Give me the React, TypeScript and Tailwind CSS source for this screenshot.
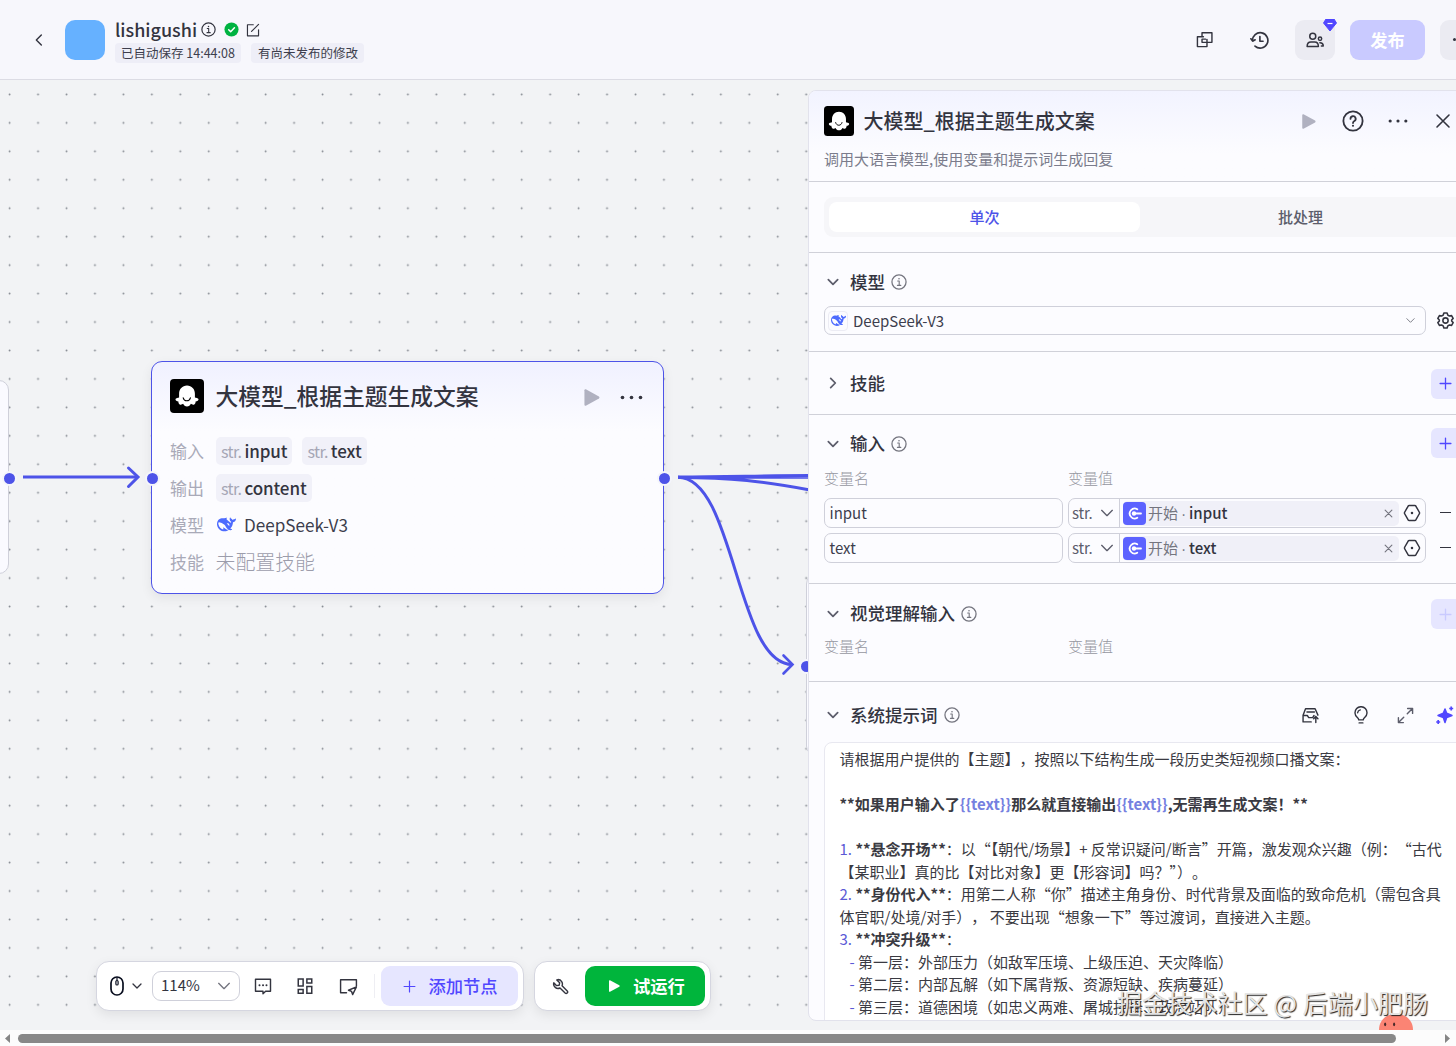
import { ReactNode, SVGProps, useState } from "react";

type IconProps = SVGProps<SVGSVGElement>;

function Icon({ children, ...rest }: IconProps) {
  return (
    <svg
      viewBox="0 0 24 24"
      fill="none"
      stroke="currentColor"
      strokeWidth={2}
      strokeLinecap="round"
      strokeLinejoin="round"
      {...rest}
    >
      {children}
    </svg>
  );
}

const InfoIcon = (p: IconProps) => (
  <Icon strokeWidth={1.9} {...p}>
    <circle cx="12" cy="12" r="10.6" />
    <path d="M10 10.5h2.3V17M9.6 17h5.2" strokeWidth={1.7} />
    <circle cx="12" cy="7.2" r="1.2" fill="currentColor" stroke="none" />
  </Icon>
);

const ChevronDown = (p: IconProps) => (
  <Icon {...p}>
    <path d="M4 8l8 8 8-8" />
  </Icon>
);

const PlusIcon = (p: IconProps) => (
  <Icon {...p}>
    <path d="M12 2v20M2 12h20" />
  </Icon>
);

const PlayIcon = (p: IconProps) => (
  <svg viewBox="0 0 24 24" fill="currentColor" {...p}>
    <path d="M2 1.6C2 .5 3 0 4 .5l18.5 10c1 .6 1 2.300 0 2.900L4 23.500c-1 .5-2 0-2-1.100z" />
  </svg>
);

const DotsIcon = (p: IconProps) => (
  <svg viewBox="0 0 24 24" fill="currentColor" {...p}>
    <circle cx="2.600" cy="12" r="1.900" />
    <circle cx="12" cy="12" r="1.900" />
    <circle cx="21.400" cy="12" r="1.900" />
  </svg>
);

const DeepSeekLogo = (p: IconProps) => (
  <svg viewBox="0 0 24 24" fill="#4d6bfe" {...p}>
    <path d="M23.748 4.482c-.254-.124-.364.113-.512.234-.051.039-.094.09-.137.136-.372.397-.806.657-1.373.626-.829-.046-1.537.214-2.163.848-.133-.782-.575-1.248-1.247-1.548-.352-.156-.708-.311-.955-.65-.172-.241-.219-.51-.305-.774-.055-.16-.11-.323-.293-.35-.2-.031-.278.136-.356.276-.313.572-.434 1.202-.422 1.84.027 1.436.633 2.58 1.838 3.393.137.093.172.187.129.323-.082.28-.18.552-.266.833-.055.179-.137.217-.329.14a5.526 5.526 0 01-1.736-1.18c-.857-.828-1.631-1.742-2.597-2.458a11.365 11.365 0 00-.689-.471c-.985-.957.13-1.743.388-1.836.27-.098.093-.432-.779-.428-.872.004-1.67.295-2.687.684a3.055 3.055 0 01-.465.137 9.597 9.597 0 00-2.883-.102c-1.885.21-3.39 1.102-4.497 2.623C.082 8.606-.231 10.684.152 12.85c.403 2.284 1.569 4.175 3.36 5.653 1.858 1.533 3.997 2.284 6.438 2.14 1.482-.085 3.133-.284 4.994-1.86.47.234.962.327 1.78.397.63.059 1.236-.03 1.705-.128.735-.156.684-.837.419-.961-2.155-1.004-1.682-.595-2.113-.926 1.096-1.296 2.746-2.642 3.392-7.003.05-.347.007-.565 0-.845-.004-.17.035-.237.23-.256a4.173 4.173 0 001.545-.475c1.396-.763 1.96-2.015 2.093-3.517.02-.23-.004-.467-.247-.588zM11.581 18c-2.089-1.642-3.102-2.183-3.52-2.16-.392.024-.321.471-.235.763.09.288.207.486.371.739.114.167.192.416-.113.603-.673.416-1.842-.14-1.897-.167-1.361-.802-2.5-1.86-3.301-3.307-.774-1.393-1.224-2.887-1.298-4.482-.02-.386.093-.522.477-.592a4.696 4.696 0 011.529-.039c2.132.312 3.946 1.265 5.468 2.774.868.86 1.525 1.887 2.202 2.891.72 1.066 1.494 2.082 2.48 2.914.348.292.625.514.891.677-.802.09-2.14.11-3.054-.614zm1-6.44a.306.306 0 01.415-.287.302.302 0 01.2.288.306.306 0 01-.31.307.303.303 0 01-.304-.308zm3.11 1.596c-.2.081-.399.151-.59.16a1.245 1.245 0 01-.798-.254c-.274-.23-.47-.358-.552-.758a1.73 1.73 0 01.016-.588c.07-.327-.008-.537-.239-.727-.187-.156-.426-.199-.688-.199a.559.559 0 01-.254-.078.253.253 0 01-.114-.358c.028-.054.16-.186.192-.21.356-.202.767-.136 1.146.016.352.144.618.408 1.001.782.391.451.462.576.685.914.176.265.336.537.445.848.067.195-.019.354-.25.452z" />
  </svg>
);

// black tile with the smiling ghost, used for LLM nodes
const GhostTile = (p: IconProps) => (
  <svg viewBox="0 0 34 34" {...p}>
    <rect width="34" height="34" rx="4" fill="#000" />
    <path
      d="M17 6.600c-4.700 0-7.900 3.600-7.900 8.200v3.700c-1 .6-3.200.4-3.600 1.600-.3 1.300 1.400 2.300 2.900 2.400-.1 1.500.6 2.900 1.800 3.200 1.200.3 2.200-.5 2.900-.9.700 1.600 2.100 2.700 3.900 2.700s3.200-1.100 3.900-2.700c.7.400 1.700 1.200 2.900.9 1.200-.3 1.900-1.700 1.800-3.200 1.500-.1 3.200-1.100 2.900-2.400-.4-1.200-2.600-1-3.600-1.600v-3.700c0-4.600-3.200-8.200-7.900-8.200z"
      fill="#fff"
    />
    <path d="M13.200 18.800c.5 1.900 1.900 3 3.600 3s3.100-1.100 3.600-3" fill="none" stroke="#000" strokeWidth="1.100" strokeLinecap="round" />
  </svg>
);

function Header() {
  return (
    <header className="flex h-20 shrink-0 items-center border-b border-[#dcdce4] bg-[#f7f7fc] pl-[31px]">
      <Icon className="mr-[18px] h-4 w-4 text-[#33343f]" strokeWidth={2.1}>
        <path d="M15.500 4.500L8 12l7.500 7.500" />
      </Icon>
      <div className="h-10 w-10 rounded-[10px] bg-[#66b1ff]" />
      <div className="ml-[10px] flex flex-col pt-0.5">
        <div className="flex h-[22px] items-center text-[#33343f]">
          <span className="-mt-px w-[86px] text-[18px] font-medium leading-[22px]">lishigushi</span>
          <InfoIcon className="h-[15px] w-[15px]" />
          <svg viewBox="0 0 24 24" className="ml-2 h-[15px] w-[15px]">
            <circle cx="12" cy="12" r="11.300" fill="#00b341" />
            <path d="M7.500 12.300l3.200 3.200 6-6.200" fill="none" stroke="#fff" strokeWidth="2.400" strokeLinecap="round" strokeLinejoin="round" />
          </svg>
          <Icon className="ml-[7px] h-[14px] w-[14px]" strokeWidth={2}>
            <path d="M12.500 3H2.500v19h19V11.500M9.500 14.500L21.500 2.500" />
          </Icon>
        </div>
        <div className="mt-0.5 flex gap-[10px] text-[12.500px] leading-5 text-[#3d3e4d]">
          <span className="h-5 w-[126px] whitespace-nowrap rounded bg-[#eeeef7] pl-[6px]">已自动保存 14:44:08</span>
          <span className="h-5 w-[113px] whitespace-nowrap rounded bg-[#eeeef7] pl-[7px]">有尚未发布的修改</span>
        </div>
      </div>

      <div className="ml-auto flex shrink-0 items-center text-[#33343f]">
        <Icon className="mr-[37px] h-[17px] w-[17px]" strokeWidth={2}>
          <path d="M8.500 8V2.500H22.500v13.500H8.500v-4.500h5M10.500 8H2v14h13.500v-5.500v-4.500" />
        </Icon>
        <Icon className="mr-[26px] mt-px h-[19px] w-[19px]" strokeWidth={2.1}>
          <path d="M3.200 12.500A9.700 9.700 0 1 1 6.300 19M1.200 9.800l2.100 3 3.200-1.600M12.500 7v6h4" />
        </Icon>
        <div className="relative mr-[15px] flex h-10 w-10 items-center justify-center rounded-[9px] bg-[#ebebf2]">
          <Icon className="h-[18px] w-[18px]" strokeWidth={2}>
            <circle cx="9" cy="7" r="4" />
            <path d="M1.500 20.500c0-4 2-6 5-6h5c3 0 5 2 5 6z" />
            <circle cx="18.700" cy="10.300" r="2.200" />
            <path d="M18.500 15.500c3 0 4.500 1.500 4.500 4.500h-2.500" />
          </Icon>
          <svg viewBox="0 0 14 12" className="absolute -right-[2px] -top-[1px] h-3 w-[14px]">
            <path d="M3 0h8l2.500 4L7 12 .5 4z" fill="#5147ff" stroke="#5147ff" strokeLinejoin="round" />
            <path d="M4.500 4.500h5" stroke="#fff" strokeWidth="1.200" />
          </svg>
        </div>
        <button className="h-10 w-[75px] rounded-[9px] bg-[#c9caff] text-[17.200px] font-bold leading-10 text-white">发布</button>
        <div className="ml-[15px] flex h-10 w-4 items-center justify-end overflow-hidden rounded-l-[9px] bg-[#ebebf2]">
          <span className="h-[3px] w-[3px] rounded-full bg-[#33343f]" />
        </div>
      </div>
    </header>
  );
}

function Wires() {
  return (
    <svg className="absolute inset-0 h-full w-full" fill="none" stroke="#4d53e8" strokeWidth="3">
      <defs>
        <pattern id="dots" x="-4.700" y="0.200" width="28.450" height="28.450" patternUnits="userSpaceOnUse">
          <circle cx="14.300" cy="14.200" r="0.950" fill="#868a92" stroke="none" />
        </pattern>
      </defs>
      <rect width="100%" height="100%" fill="url(#dots)" stroke="none" />
      <path d="M23 397h115" />
      <path d="M128.500 388l9.500 9-9.500 9.500" strokeLinecap="round" />
      <path d="M678 397.200C735 397.200 736 584 792 584.500" />
      <path d="M783.500 575.500l9 9-9 9" strokeLinecap="round" strokeWidth="2.600" />
      <path d="M678 397C730 397 760 395.500 810 395.500M678 397.300h132M678 397.500c55 0 85 4 132 12.500" />
    </svg>
  );
}

function Port({ className }: { className: string }) {
  return <span className={`absolute h-[15px] w-[15px] rounded-full border-2 border-[#f4f5fb] bg-[#4d53e8] ${className}`} />;
}

function VarChip({ name }: { name: string }) {
  return (
    <span className="flex h-[28px] items-center rounded-[5px] bg-[#f1f1f9] px-[5px] text-[17px]">
      <span className="mr-[3px] text-[16px] tracking-[-0.6px] text-[#a5a6b5]">str.</span>
      <span className="font-medium tracking-[-0.1px] text-[#33343f]">{name}</span>
    </span>
  );
}

function NodeRow({ label, children }: { label: string; children: ReactNode }) {
  return (
    <div className="flex h-[37px] items-center">
      <span className="w-[46px] text-[17px] text-[#a9aab8]">{label}</span>
      {children}
    </div>
  );
}

function LlmNode() {
  return (
    <div className="absolute left-[151px] top-[281px] h-[233px] w-[513px] rounded-[11px] border-[1.500px] border-[#4d53e8] bg-[#fcfcff] bg-linear-to-b from-[#f0f1ff] to-[#fcfcff] to-30% px-[18px] shadow-[0_4px_12px_rgba(0,0,0,0.07)]">
      <div className="mb-px flex h-[69px] items-center">
        <GhostTile className="-mt-px h-[34px] w-[34px]" />
        <span className="ml-[11.500px] text-[22.760px] font-medium text-[#33343f]">大模型_根据主题生成文案</span>
        <PlayIcon className="ml-auto mt-px h-[17px] w-[17px] text-[#b0b1c0]" />
        <DotsIcon className="ml-5 mr-[2px] mt-px h-[23px] w-[23px] text-[#33343f]" />
      </div>
      <NodeRow label="输入">
        <div className="flex gap-[10px]">
          <VarChip name="input" />
          <VarChip name="text" />
        </div>
      </NodeRow>
      <NodeRow label="输出">
        <VarChip name="content" />
      </NodeRow>
      <NodeRow label="模型">
        <DeepSeekLogo className="ml-px h-[19px] w-[19px]" />
        <span className="ml-2 text-[17.100px] text-[#3d3e4d]">DeepSeek-V3</span>
      </NodeRow>
      <NodeRow label="技能">
        <span className="-ml-[0.500px] text-[19.900px] font-light text-[#9c9dab]">未配置技能</span>
      </NodeRow>
    </div>
  );
}

function Toolbar() {
  return (
    <div className="flex gap-[10px] pb-[19px] pl-24">
      <div className="flex h-[50px] w-[428px] items-center rounded-[13px] border border-[#d5d6e0] bg-white text-[#33343f] shadow-[0_4px_12px_rgba(0,0,0,0.08)]">
        <svg viewBox="0 0 14 20" className="ml-[13px] h-5 w-[14px]" fill="none" stroke="#080d1e" strokeWidth="1.700">
          <rect x="1" y="1" width="12" height="18" rx="6" />
          <path d="M7 1.500v3" strokeWidth="1.200" />
          <rect x="5.900" y="4.500" width="2.200" height="4.500" rx="1.100" strokeWidth="1.200" />
        </svg>
        <ChevronDown className="ml-[7px] h-3 w-3" strokeWidth={2.6} />
        <div className="ml-[9px] flex h-[30px] w-[88px] items-center justify-between rounded-[9px] border border-[#cfd0da] pl-2 pr-[7px]">
          <span className="-mt-px text-[15px]">114%</span>
          <ChevronDown className="h-4 w-4 text-[#74757f]" strokeWidth={2} />
        </div>
        <Icon className="ml-[14px] h-[18px] w-[18px]" strokeWidth={1.9}>
          <path d="M2 3h20v16h-6.500L12 22.300V19H2z" />
          <path d="M7.300 11h.1M12 11h.1M16.600 11h.1" strokeWidth={2.6} />
        </Icon>
        <Icon className="ml-6 h-[18px] w-[18px]" strokeWidth={2} strokeLinejoin="miter">
          <path d="M3 2.500h6.500v9.500H3zM14.500 2.500h6.500v5.500h-6.500zM3 16.500h6.500v5H3zM14.500 12.500h6.500v9h-6.500z" />
        </Icon>
        <Icon className="ml-[25px] h-[19px] w-[19px]" strokeWidth={1.8}>
          <path d="M9.500 20H2V3.500h20v8" />
          <path d="M22 12.500l-10 4.200 3.900 1.500 1.300 4z" />
        </Icon>
        <span className="ml-4 h-6 w-px bg-[#eeeef3]" />
        <button className="ml-[6px] flex h-10 w-[137px] items-center rounded-[9px] bg-[#e6e6ff] pl-[22px] text-[#5147ff]">
          <PlusIcon className="h-[13px] w-[13px]" strokeWidth={2.2} />
          <span className="ml-[12.500px] text-[17.300px] font-medium">添加节点</span>
        </button>
      </div>
      <div className="flex h-[50px] w-[177px] items-center rounded-[13px] border border-[#d5d6e0] bg-white shadow-[0_4px_12px_rgba(0,0,0,0.08)]">
        <Icon className="ml-[17px] h-[17px] w-[17px] text-[#33343f]" strokeWidth={2}>
          <path d="M8.500 2.200a6.300 6.300 0 0 1 5.700 8.700l7.300 7.300c1.800 2-1 5-3 3.100l-7.200-7.200A6.300 6.300 0 0 1 2.500 6.800l4 4 3.600-.6.700-3.400-4-4z" />
        </Icon>
        <button className="ml-4 flex h-10 w-[120px] items-center rounded-[10px] bg-[#00b53c] pl-[23px] text-white">
          <PlayIcon className="h-3 w-3" />
          <span className="ml-[13px] text-[17.300px] font-bold">试运行</span>
        </button>
      </div>
    </div>
  );
}

function SectionTitle({ title, open = true, info = true }: { title: string; open?: boolean; info?: boolean }) {
  return (
    <div className="flex h-[26px] items-center">
      <ChevronDown className={`ml-[1.500px] h-[14px] w-[14px] text-[#5c5d6b] ${open ? "" : "-rotate-90"}`} strokeWidth={3} />
      <span className="ml-[10.500px] text-[17.500px] font-medium text-[#33343f]">{title}</span>
      {info && <InfoIcon className="ml-[6px] h-4 w-4 text-[#74757f]" />}
    </div>
  );
}

function AddButton({ disabled = false }: { disabled?: boolean }) {
  return (
    <button className={`flex h-[30px] w-[30px] items-center justify-center rounded-md bg-[#e6e6ff] ${disabled ? "text-[#c9caff]" : "text-[#5147ff]"}`}>
      <PlusIcon className="-ml-[1px] h-[13px] w-[13px]" strokeWidth={2.4} />
    </button>
  );
}

function VarLabels() {
  return (
    <div className="flex h-5 items-center text-[15px] font-light text-[#96979f]">
      <span className="w-[244px]">变量名</span>
      <span>变量值</span>
    </div>
  );
}

function InputRow({ name }: { name: string }) {
  return (
    <div className="flex h-[30px] items-center text-[15px] text-[#3d3e4d]">
      <div className="flex h-full w-[239px] items-center rounded-[7px] border border-[#cfd0da] pl-[4.500px]">{name}</div>
      <div className="ml-[5px] flex h-full w-[358px] items-center overflow-hidden rounded-[7px] border border-[#cfd0da]">
        <div className="flex h-full w-[51px] items-center border-r border-[#cfd0da] pl-[3px]">
          <span className="w-[27px] text-[15px] tracking-[-0.2px] text-[#5c5d6b]">str.</span>
          <ChevronDown className="h-4 w-4 text-[#5c5d6b]" strokeWidth={2} />
        </div>
        <div className="ml-[3px] flex h-[25px] w-[276px] items-center rounded-[5px] bg-[#f0f0f8]">
          <svg viewBox="0 0 23 23" className="h-[23px] w-[23px]" fill="none" stroke="#fff">
            <rect width="23" height="23" rx="4" fill="#5c62ff" stroke="none" />
            <path d="M14.300 7.200a5 5 0 1 0 0 8.600" strokeWidth="1.800" strokeLinecap="round" />
            <circle cx="11" cy="11.500" r="2.200" fill="#fff" stroke="none" />
            <path d="M11 11.500h7" strokeWidth="1.800" strokeLinecap="round" />
          </svg>
          <span className="ml-[2px] text-[#74757f]">开始</span>
          <span className="w-[11px] pt-0.5 text-center font-['Open_Sans',sans-serif] text-[14px] text-[#74757f]">·</span>
          <span className="font-medium text-[#33343f]">{name}</span>
          <Icon className="ml-auto mr-[6px] h-[9px] w-[9px] text-[#74757f]" strokeWidth={3}>
            <path d="M3 3l18 18M21 3L3 21" />
          </Icon>
        </div>
        <Icon className="ml-[3.500px] h-[18px] w-[18px] text-[#33343f]" strokeWidth={2}>
          <path d="M8.200 2h7.600c.6 0 1 .3 1.300.7l4.700 8.300c.4.700.4 1.300 0 2l-4.700 8.300c-.3.400-.7.700-1.300.7H8.200c-.6 0-1-.3-1.300-.7L2.200 13c-.4-.7-.4-1.300 0-2l4.700-8.300c.3-.4.7-.7 1.300-.7z" />
          <circle cx="12" cy="12" r="1.700" fill="currentColor" stroke="none" />
        </Icon>
      </div>
      <span className="-mt-px ml-[14px] h-px w-[11px] bg-[#33343f]" />
    </div>
  );
}

function Num({ children }: { children: ReactNode }) {
  return <span className="text-[#5b5ad6]">{children}</span>;
}

function TextVar() {
  return <span className="font-bold text-[#7580e0]">{"{{text}}"}</span>;
}

// keeps adjacent full-width punctuation at full width
function Wide({ children }: { children: ReactNode }) {
  return <span className="[text-spacing-trim:space-all]">{children}</span>;
}

function PromptEditor() {
  return (
    <div className="h-[279px] w-[640px] overflow-hidden rounded-tl-lg border border-[#e8e8f0] bg-white pl-[14.500px] pt-[5px] text-[15px] leading-[22.500px] whitespace-pre text-[#3a3a42]">
      <div>
        <Wide>请根据用户提供的【主题】，按照以下结构生成一段历史类短视频口播文案：</Wide>
      </div>
      <div>&nbsp;</div>
      <div className="font-bold">
        **如果用户输入了<TextVar />那么就直接输出<TextVar />,无需再生成文案！**
      </div>
      <div>&nbsp;</div>
      <div>
        <Num>1.</Num> <b>**悬念开场**</b>：以“【朝代/场景】+ 反常识疑问/断言”开篇，激发观众兴趣<Wide>（例：“古代</Wide>
      </div>
      <div>
        【某职业】真的比【对比对象】更【形容词】吗？”<Wide>）。</Wide>
      </div>
      <div>
        <Num>2.</Num> <b>**身份代入**</b>：用第二人称“你”描述主角身份、时代背景及面临的致命危机（需包含具
      </div>
      <div>
        体官职/处境/对手<Wide>），</Wide> 不要出现“想象一下”等过渡词，直接进入主题。
      </div>
      <div>
        <Num>3.</Num> <b>**冲突升级**</b>：
      </div>
      {[
        "第一层：外部压力（如敌军压境、上级压迫、天灾降临）",
        "第二层：内部瓦解（如下属背叛、资源短缺、疾病蔓延）",
        "第三层：道德困境（如忠义两难、屠城抉择、政治站队）",
      ].map((line) => (
        <div key={line} className="pl-[10px]">
          <Num>-</Num> {line}
        </div>
      ))}
    </div>
  );
}

function NodePanel() {
  const [mode, setMode] = useState("单次");

  return (
    <aside className="relative mt-[10px] mb-[9px] flex w-[666px] shrink-0 flex-col overflow-hidden rounded-lg border border-[#e2e2ec] bg-[#fcfcff]">
      <div className="h-[91px] shrink-0 border-b border-[#d0d1d9] bg-linear-to-b from-[#f2f3ff] to-[#fcfcff] to-70% pl-[15px] pt-[15px]">
        <div className="flex h-[30px] items-center text-[#33343f]">
          <GhostTile className="h-[30px] w-[30px]" />
          <span className="ml-[9.500px] w-[437.500px] text-xl font-medium">大模型_根据主题生成文案</span>
          <PlayIcon className="h-[15px] w-[15px] text-[#b0b1c0]" />
          <Icon className="ml-[26px] h-[22px] w-[22px]" strokeWidth={2}>
            <circle cx="12" cy="12" r="10.500" />
            <path d="M9.300 9.700a2.800 2.800 0 1 1 4.200 2.300c-1 .6-1.500 1.100-1.500 2.200" />
            <circle cx="12" cy="17.200" r="1.200" fill="currentColor" stroke="none" />
          </Icon>
          <DotsIcon className="ml-6 h-5 w-5" />
          <Icon className="ml-[27px] h-4 w-4" strokeWidth={2.4}>
            <path d="M3 3l18 18M21 3L3 21" />
          </Icon>
        </div>
        <p className="mt-[12px] text-[15px] leading-[22px] text-[#7b7c8c]">调用大语言模型,使用变量和提示词生成回复</p>
      </div>

      <div className="h-[71px] shrink-0 border-b border-[#d0d1d9] pl-[15px] pt-[15px]">
        <div className="flex h-10 w-[642px] gap-[5px] rounded-[9px] bg-[#f6f6f9] p-[5px] text-[15px] font-medium">
          {["单次", "批处理"].map((m) => (
            <button
              key={m}
              onClick={() => setMode(m)}
              className={`h-[30px] w-[311px] shrink-0 rounded-lg ${mode === m ? "bg-white text-[#4d53e8]" : "text-[#5c5d6b]"}`}
            >
              {m}
            </button>
          ))}
        </div>
      </div>

      <div className="h-[99px] shrink-0 border-b border-[#d0d1d9] pl-[15px] pt-[16px]">
        <SectionTitle title="模型" />
        <div className="mt-[11px] flex items-center">
          <div className="flex h-[29px] w-[602px] items-center rounded-[7px] border border-[#cfd0da] pl-[3px] pr-[9px]">
            <span className="flex h-5 w-5 items-center justify-center rounded border border-[#ececf4]">
              <DeepSeekLogo className="h-[15px] w-[15px]" />
            </span>
            <span className="ml-[5px] pt-px text-[15px] text-[#3d3e4d]">DeepSeek-V3</span>
            <ChevronDown className="ml-auto h-[11px] w-[11px] text-[#74757f]" strokeWidth={2} />
          </div>
          <Icon className="ml-[11px] h-[17px] w-[17px] text-[#33343f]" strokeWidth={2.2}>
            <path d="M9.700 1.500h4.600l1 3 2.200 1.200 3.100-.6 2.200 3.900-2.100 2.300v1.400l2.100 2.300-2.200 3.900-3.100-.6-2.200 1.200-1 3H9.700l-1-3-2.200-1.200-3.100.6L1.200 15l2.100-2.300v-1.400L1.200 9l2.200-3.900 3.100.6 2.200-1.200z" />
            <circle cx="12" cy="12" r="3.700" />
          </Icon>
        </div>
      </div>

      <div className="flex h-[63px] shrink-0 items-center border-b border-[#d0d1d9] pl-[15px]">
        <div className="w-[607px]">
          <SectionTitle title="技能" open={false} info={false} />
        </div>
        <div className="mt-px">
          <AddButton />
        </div>
      </div>

      <div className="h-[169px] shrink-0 border-b border-[#d0d1d9] pl-[15px] pt-[13px]">
        <div className="flex items-center">
          <div className="w-[607px] pt-px">
            <SectionTitle title="输入" />
          </div>
          <AddButton />
        </div>
        <div className="mb-[10px] mt-[10px]">
          <VarLabels />
        </div>
        <div className="flex flex-col gap-[5px]">
          <InputRow name="input" />
          <InputRow name="text" />
        </div>
      </div>

      <div className="h-[98px] shrink-0 border-b border-[#d0d1d9] pl-[15px] pt-[15px]">
        <div className="mb-[7px] flex items-center">
          <div className="w-[607px] pb-px">
            <SectionTitle title="视觉理解输入" />
          </div>
          <AddButton disabled />
        </div>
        <VarLabels />
      </div>

      <div className="shrink-0 pl-[15px] pt-5">
        <div className="mb-[14px] flex h-[26px] items-center text-[#33343f]">
          <div className="w-[478px]">
            <SectionTitle title="系统提示词" />
          </div>
          <Icon className="h-[17px] w-[17px]" strokeWidth={2}>
            <path d="M13 21H1.500V11.500L5 2.500h13.500L22.500 11.500M7 7h10.500M1.500 12h6l2 3h5.500l2-3M19.500 22v-8.500M16.500 16.500l3-3.200 3 3.200" />
          </Icon>
          <Icon className="ml-[32.500px] h-[18px] w-[18px]" strokeWidth={1.9}>
            <path d="M9 18.500c0-1.500-1-2.300-2.200-3.500a8 8 0 1 1 10.400 0C16 16.200 15 17 15 18.500zM9.500 22.500h5M7.500 9A4.500 4.500 0 0 1 11 5.200" />
          </Icon>
          <Icon className="ml-[27.500px] h-[17px] w-[17px] text-[#5c5d6b]" strokeWidth={2}>
            <path d="M14.500 9.500l7-7M15 2h7v7M9.500 14.500l-7 7M2 15v7h7" />
          </Icon>
          <svg viewBox="0 0 18 18" className="ml-[22px] h-[18px] w-[18px]" fill="#5147ff" stroke="#5147ff" strokeLinejoin="round">
            <path d="M9 3l1.700 4.300L16 9.500l-5.300 2L9 16.500l-1.700-5L2 9.500l5.300-2.200z" strokeWidth="1.500" />
            <path d="M15.200.5v4M13.200 2.500h4M2.200 14v4M.2 16h4" strokeWidth="1.700" fill="none" />
          </svg>
        </div>
        <PromptEditor />
      </div>
    </aside>
  );
}

function Scrollbar() {
  return (
    <div className="flex h-4 shrink-0 items-center bg-[#fcfcfc] text-[#858585]">
      <svg viewBox="0 0 18 16" className="h-4 w-[18px]" fill="currentColor">
        <path d="M10 4v9L5 8.500z" />
      </svg>
      <div className="h-[9px] w-[1378px] rounded-full bg-[#888]" />
      <svg viewBox="0 0 18 16" className="ml-auto mr-0 h-4 w-[18px]" fill="currentColor">
        <path d="M7 4v9l5-4.500z" />
      </svg>
    </div>
  );
}

export default function App() {
  return (
    <div
      lang="zh-CN"
      className="flex h-[1046px] w-[1456px] flex-col overflow-hidden bg-[#f2f3f5] font-['Noto_Sans_CJK_SC',sans-serif]"
    >
      <Header />
      <main className="relative flex h-[950px] overflow-hidden">
        <Wires />
        <div className="absolute -left-5 top-[300px] h-[194px] w-[29px] rounded-r-[10px] border border-[#cfd0da] bg-[#fafaff]" />
        <div className="absolute left-[806px] top-[494px] h-[182px] w-10 rounded-l-[10px] border border-[#cfd0da] bg-[#fafaff]" />
        <LlmNode />
        <Port className="left-[2px] top-[391px]" />
        <Port className="left-[144.500px] top-[391px]" />
        <Port className="left-[657px] top-[391px]" />
        <Port className="left-[799px] top-[579px]" />
        <div className="relative flex w-[808px] shrink-0 flex-col justify-end">
          <Toolbar />
        </div>
        <NodePanel />
        <svg viewBox="0 0 38 18" className="absolute bottom-0 left-[1377px] h-[17px] w-[38px]">
          <path d="M1 18C1 8 8 1 19 1s18 7 18 17z" fill="#fb8474" />
          <ellipse cx="7.500" cy="12" rx="1.100" ry="2" fill="#4a2a2a" />
          <ellipse cx="17" cy="12" rx="1.100" ry="2" fill="#4a2a2a" />
        </svg>
        <div className="absolute bottom-[10px] left-[1117px] whitespace-nowrap text-[25.100px] leading-9 text-[#e4e4e4] [text-shadow:1px_1px_1px_#222]">
          掘金技术社区 @ 后端小肥肠
        </div>
      </main>
      <Scrollbar />
    </div>
  );
}
